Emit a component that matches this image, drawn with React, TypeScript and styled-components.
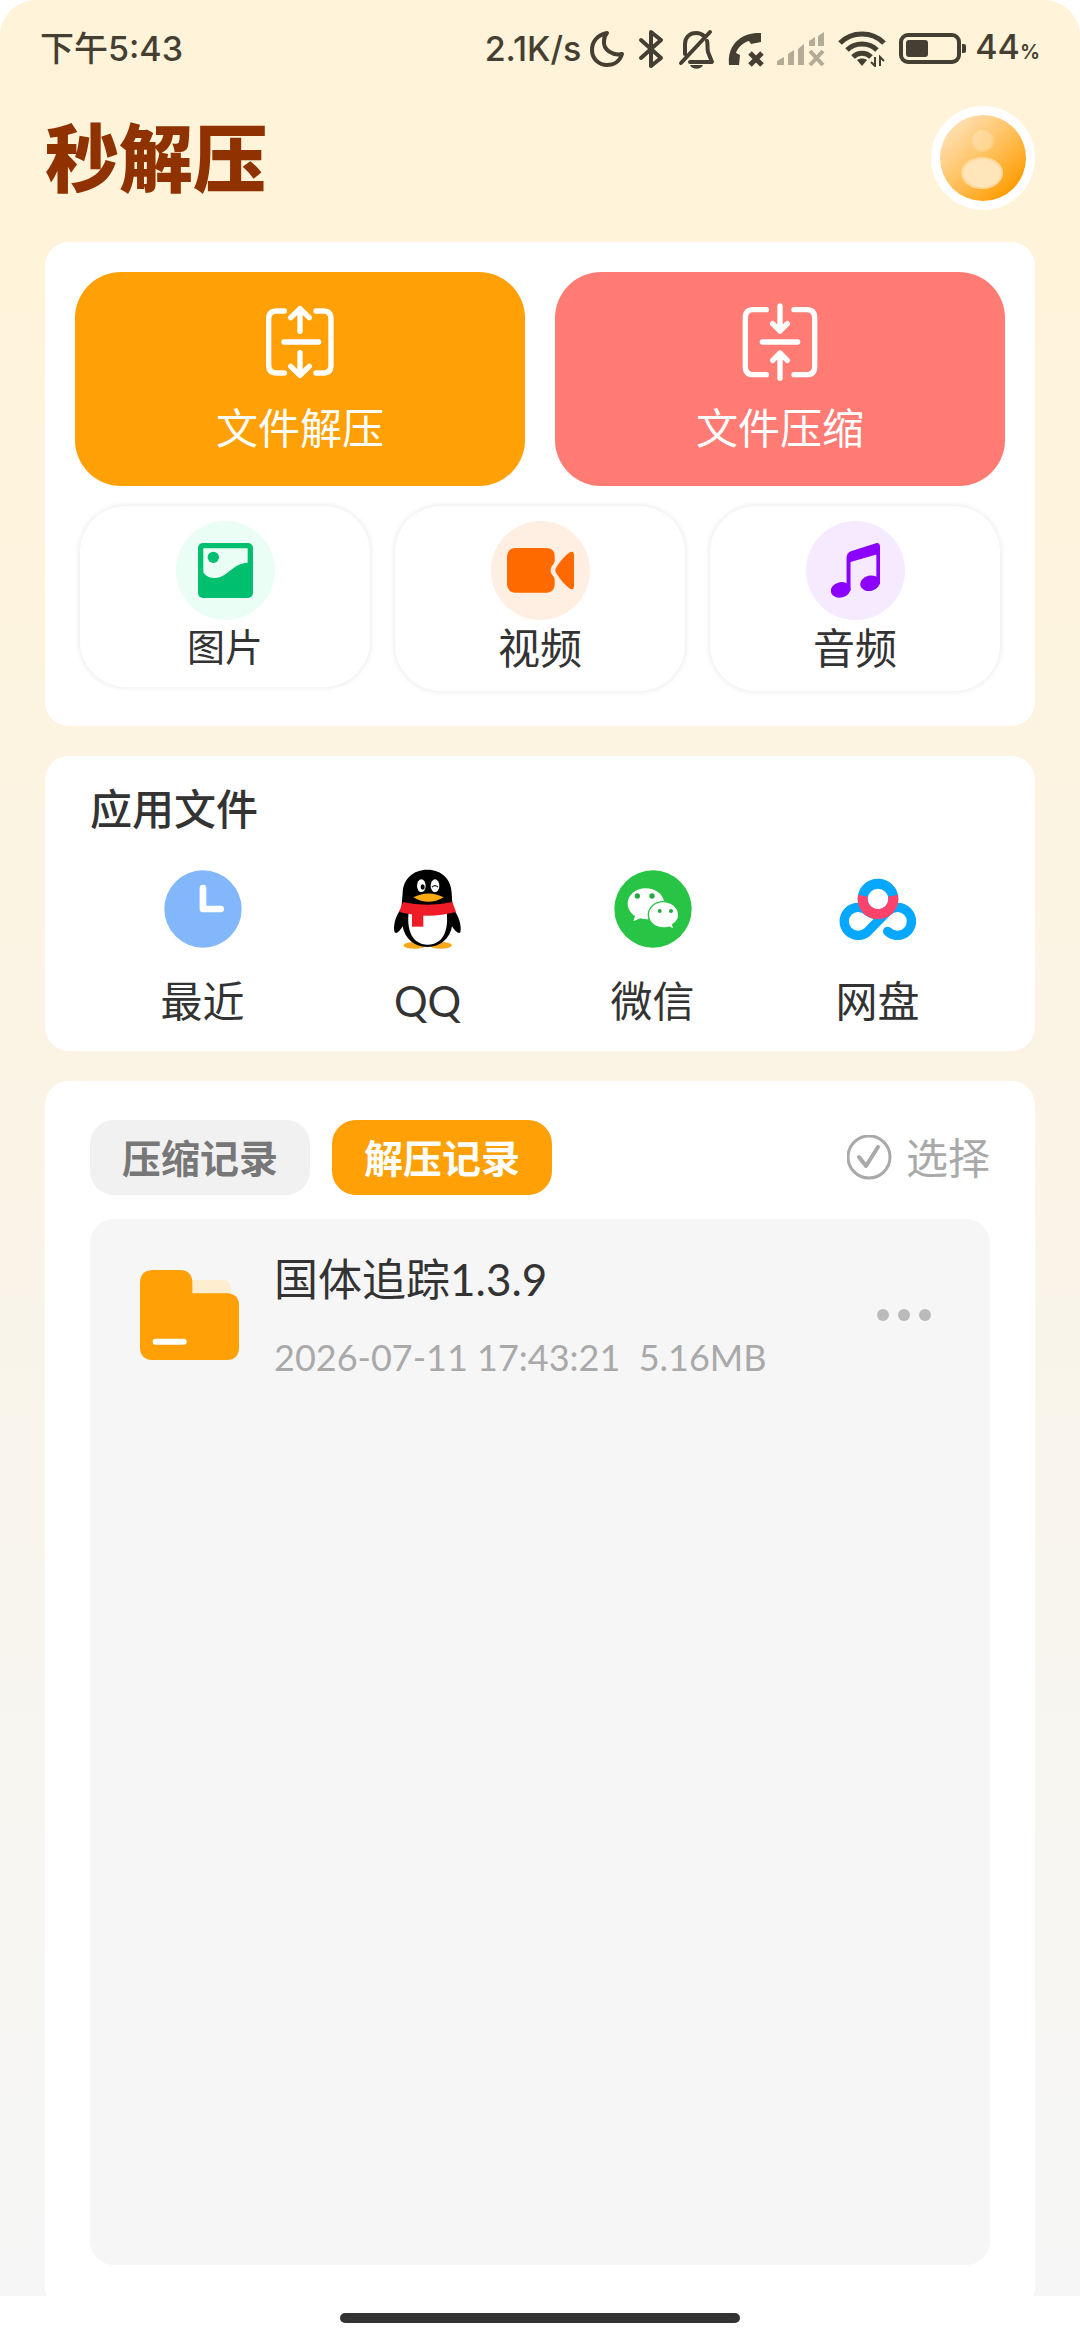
import React, { useState } from "react";
import styled, { createGlobalStyle } from "styled-components";

const GlobalStyle = createGlobalStyle`
  *, *::before, *::after { box-sizing: border-box; }
  body {
    margin: 0;
    background: #ffffff;
    color: #333333;
    font-family: Lato, "Noto Sans CJK SC", sans-serif;
  }
  button {
    border: 0;
    padding: 0;
    margin: 0;
    background: none;
    color: inherit;
    font: inherit;
    cursor: pointer;
  }
  h1, h2, p, ul { margin: 0; padding: 0; }
  svg { display: block; flex: none; }
`;

const Screen = styled.div`
  display: flex;
  flex-direction: column;
  min-height: 100vh;
`;

const Page = styled.div`
  flex: 1;
  display: flex;
  flex-direction: column;
  overflow: hidden;
  border-radius: 36px 36px 0 0;
  background: linear-gradient(180deg, #fff3d9 0%, #fff3d9 10%, #fbf4e5 45%, #f7f6f2 80%, #f6f6f6 100%);
`;

const StatusBar = styled.div`
  display: flex;
  align-items: center;
  justify-content: space-between;
  height: 98px;
  padding: 0 40px;
  color: #453f33;
  font-family: Inter, "Noto Sans CJK SC", sans-serif;
  font-size: 34px;
  line-height: 48px;
  font-weight: 500;
`;

const StatusGroup = styled.div`
  display: flex;
  align-items: center;
`;

const StatusIcons = styled.div`
  display: flex;
  align-items: center;
  gap: 13px;
  padding: 0 8px;
`;

const Percent = styled.small`
  font-size: 20px;
  font-weight: 600;
`;

const Header = styled.header`
  display: flex;
  align-items: center;
  justify-content: space-between;
  padding: 8px 45px 32px;
`;

const Brand = styled.h1`
  padding-bottom: 8px;
  color: #8f3200;
  font-family: "Noto Sans CJK SC", sans-serif;
  font-size: 74px;
  line-height: 92px;
  font-weight: 900;
`;

const AvatarButton = styled.button`
  border-radius: 50%;
`;

const Content = styled.main`
  flex: 1;
  display: flex;
  flex-direction: column;
  gap: 30px;
  padding: 0 45px;
`;

const Card = styled.section`
  border-radius: 24px;
  background: #ffffff;
`;

const ActionsCard = styled(Card)`
  display: flex;
  flex-direction: column;
  gap: 20px;
  padding: 30px 30px 35px;
`;

const MainActions = styled.div`
  display: grid;
  grid-template-columns: 1fr 1fr;
  gap: 30px;
`;

const MainAction = styled.button<{ $tone: string }>`
  display: flex;
  flex-direction: column;
  align-items: center;
  gap: 18px;
  padding: 30px;
  border-radius: 46px;
  background: ${(p) => p.$tone};
  color: #ffffff;
  font-size: 42px;
  line-height: 56px;
`;

const MediaActions = styled.div`
  display: grid;
  grid-template-columns: repeat(3, 1fr);
  align-items: start;
  gap: 25px;
  padding: 0 5px;
`;

const MediaAction = styled.button<{ $compact?: boolean }>`
  display: flex;
  flex-direction: column;
  align-items: center;
  padding: 15px;
  border-radius: 46px;
  box-shadow: 0 0 4px 2px rgba(0, 0, 0, 0.06);
  font-size: ${(p) => (p.$compact ? 38 : 42)}px;
  line-height: ${(p) => (p.$compact ? 52 : 56)}px;
`;

const MediaBadge = styled.span<{ $tone: string }>`
  display: grid;
  place-items: center;
  width: 99px;
  height: 99px;
  border-radius: 50%;
  background: ${(p) => p.$tone};
`;

const AppsCard = styled(Card)`
  padding: 25px 45px 22px;
`;

const CardTitle = styled.h2`
  font-size: 42px;
  line-height: 56px;
  font-weight: 500;
`;

const AppGrid = styled.div`
  display: grid;
  grid-template-columns: repeat(4, 1fr);
  padding-top: 32px;
`;

const AppButton = styled.button`
  display: flex;
  flex-direction: column;
  align-items: center;
  gap: 24px;
  font-size: 42px;
  line-height: 56px;
`;

const RecordsCard = styled(Card)`
  flex: 1;
  display: flex;
  flex-direction: column;
  gap: 24px;
  margin-bottom: -15px;
  padding: 39px 45px 46px;
`;

const RecordsBar = styled.div`
  display: flex;
  align-items: center;
  justify-content: space-between;
`;

const Tabs = styled.div`
  display: flex;
  gap: 22px;
`;

const Tab = styled.button<{ $active: boolean }>`
  height: 75px;
  padding: 0 32px;
  border-radius: 24px;
  background: ${(p) => (p.$active ? "#ffa006" : "#f1f1f1")};
  color: ${(p) => (p.$active ? "#ffffff" : "#777777")};
  font-size: 39px;
  line-height: 52px;
  font-weight: 700;
`;

const SelectButton = styled.button`
  display: flex;
  align-items: center;
  gap: 14px;
  color: #a9a9a9;
  font-size: 42px;
  line-height: 56px;
`;

const RecordList = styled.ul`
  flex: 1;
  border-radius: 24px;
  background: #f6f6f6;
  list-style: none;
`;

const Record = styled.li`
  display: flex;
  align-items: center;
  gap: 35px;
  min-height: 192px;
  padding: 30px 50px;
`;

const RecordText = styled.div`
  flex: 1;
  display: flex;
  flex-direction: column;
  gap: 24px;
`;

const RecordName = styled.p`
  font-size: 44px;
  line-height: 60px;
`;

const RecordMeta = styled.p`
  color: #a9a9a9;
  font-size: 36px;
  line-height: 48px;
  white-space: pre;
`;

const MoreButton = styled.button`
  display: flex;
  gap: 9px;
  padding: 20px 9px;
`;

const Dot = styled.span`
  width: 12px;
  height: 12px;
  border-radius: 50%;
  background: #bababa;
`;

const NavBar = styled.footer`
  display: flex;
  align-items: center;
  justify-content: center;
  height: 44px;
  background: #ffffff;
`;

const HomeIndicator = styled.div`
  width: 37%;
  height: 10px;
  border-radius: 5px;
  background: #333333;
`;

const INK = "#453f33";

const MoonIcon = () => (
  <svg width="36" height="38" viewBox="0 0 36 38" fill="none" stroke={INK} strokeWidth="4" strokeLinejoin="round">
    <path d="M18 3C8 5 3 12 3 20c0 9 7 15 15 15 7 0 13-4 15-11-9 2-19-4-18-13 0-3 1-6 3-8z" />
  </svg>
);

const BluetoothIcon = () => (
  <svg width="26" height="40" viewBox="0 0 26 40" fill="none" stroke={INK} strokeWidth="4" strokeLinejoin="round" strokeLinecap="round">
    <path d="M3 11l20 18-10 8V3l10 8L3 29" />
  </svg>
);

const BellOffIcon = () => (
  <svg width="38" height="40" viewBox="0 0 38 40" fill="none" stroke={INK} strokeWidth="4" strokeLinecap="round" strokeLinejoin="round">
    <path d="M33 3L4 34M8 25V15C8 8 13 4 19 4c3 0 6 1 8 3M30 12c1 3 0 7 1 11l4 10H13" />
    <path d="M13 36c2 5 11 5 13 0z" fill={INK} stroke="none" />
  </svg>
);

const PhoneOffIcon = () => (
  <svg width="36" height="36" viewBox="0 0 36 36">
    <path d="M1 34h10l1-10-4-2C10 16 16 11 21 10l2 3 10-2V2C15 1-1 12 1 34z" fill={INK} />
    <path d="M22 22l12 12M34 22L22 34" stroke={INK} strokeWidth="5" fill="none" />
  </svg>
);

const SignalIcon = () => (
  <svg width="48" height="34" viewBox="0 0 48 34" fill="#b3ab98">
    <path d="M0 33v-4l7-4v8zM11 33V22l6-4v15zM21 33V17l6-5v21zM32 14V9l6-4v9zM41 14V4l6-4v14z" />
    <path d="M33 19l13 14M46 19L33 33" stroke="#b3ab98" strokeWidth="4" fill="none" />
  </svg>
);

const WifiIcon = () => (
  <svg width="48" height="36" viewBox="0 0 48 36" fill="none" stroke={INK} strokeWidth="5">
    <path d="M2 12C14 0 34 0 46 12M9 19c8-8 22-8 30 0M15 26c5-5 13-5 18 0" />
    <path d="M19 29c3-2 7-2 10 0l-5 6z" fill={INK} stroke="none" />
    <path d="M37 26v9l-4-4M42 35v-9l4 4" strokeWidth="2" />
  </svg>
);

const BatteryIcon = () => (
  <svg width="68" height="32" viewBox="0 0 68 32">
    <rect x="2" y="2" width="58" height="27" rx="7" fill="none" stroke={INK} strokeWidth="4" />
    <rect x="7" y="7" width="22" height="17" rx="3" fill={INK} />
    <path d="M63 11h2a2 2 0 0 1 2 2v5a2 2 0 0 1-2 2h-2z" fill={INK} />
  </svg>
);

const Avatar = () => (
  <svg width="104" height="104" viewBox="0 0 104 104">
    <defs>
      <linearGradient id="avatar-skin" x1="0.15" y1="0.1" x2="0.85" y2="0.85">
        <stop offset="0" stopColor="#ffe0b5" />
        <stop offset="0.5" stopColor="#ffc260" />
        <stop offset="1" stopColor="#ff9d05" />
      </linearGradient>
      <linearGradient id="avatar-head" x1="0" y1="0" x2="1" y2="1">
        <stop offset="0" stopColor="#ffdda8" />
        <stop offset="1" stopColor="#ffd48c" />
      </linearGradient>
    </defs>
    <circle cx="52" cy="52" r="52" fill="#ffffff" />
    <circle cx="52" cy="52" r="43" fill="url(#avatar-skin)" />
    <circle cx="51" cy="34" r="11" fill="url(#avatar-head)" stroke="#ffcf82" strokeWidth="2" />
    <ellipse cx="51" cy="67" rx="20" ry="15" fill="#ffe5b9" stroke="#ffd999" strokeWidth="2" />
  </svg>
);

const UnzipIcon = () => (
  <svg width="80" height="80" viewBox="0 0 240 240" fill="none" stroke="#ffffff" strokeWidth="16" strokeLinecap="round" strokeLinejoin="round">
    <path d="M73 27H50Q26 27 26 51V189Q26 213 50 213H73M168 27H190Q213 27 213 51V189Q213 213 190 213H168" />
    <path d="M120 88V20M92 47l28-27 28 27M72 120H176M120 152v68M92 193l28 27 28-27" />
  </svg>
);

const ZipIcon = () => (
  <svg width="80" height="80" viewBox="0 0 240 240" fill="none" stroke="#ffffff" strokeWidth="16" strokeLinecap="round" strokeLinejoin="round">
    <path d="M79 23H40Q16 23 16 47V194Q16 218 40 218H79M162 23H200Q224 23 224 47V194Q224 218 200 218H162" />
    <path d="M120 12V87M98 65l22 22 22-22M67 120H173M120 229V153M98 175l22-22 22 22" />
  </svg>
);

const PictureIcon = () => (
  <svg width="55" height="55" viewBox="0 0 165 165">
    <rect width="165" height="165" rx="15" fill="#00c070" />
    <path d="M16 16H149V59C100 62 90 105 48 105 32 105 22 98 16 88Z" fill="#ebfef6" />
    <circle cx="46" cy="43" r="17" fill="#00c070" />
  </svg>
);

const VideoIcon = () => (
  <svg width="67" height="45" viewBox="0 0 201 135" fill="#ff6a00">
    <path d="M24 0H120Q143 2 143 24V40Q142 47 134 55Q128 67 134 79Q142 87 143 94V110Q142 132 120 134H24Q2 132 0 110V24Q2 2 24 0Z" />
    <path d="M148 76Q142 67 148 58Q168 26 190 12Q200 8 201 20V116Q199 127 190 123Q166 106 148 76Z" />
  </svg>
);

const MusicIcon = () => (
  <svg width="49" height="55" viewBox="0 0 148 165" fill="#8c00ff">
    <path d="M47 44Q48 28 60 24L136 0Q147-2 148 10V124H137V34L59 57V144H47Z" />
    <ellipse cx="29" cy="141" rx="30" ry="23" transform="rotate(-14 29 141)" />
    <ellipse cx="118" cy="121" rx="30" ry="23" transform="rotate(-14 118 121)" />
  </svg>
);

const ClockIcon = () => (
  <svg width="80" height="80" viewBox="0 0 240 240">
    <circle cx="120" cy="120" r="116" fill="#82b8fb" />
    <path d="M120 57V120H173" fill="none" stroke="#ffffff" strokeWidth="20" strokeLinecap="round" strokeLinejoin="round" />
  </svg>
);

const PenguinIcon = () => (
  <svg width="80" height="80" viewBox="0 0 240 240">
    <ellipse cx="80" cy="229" rx="34" ry="10" fill="#f5a81c" />
    <ellipse cx="158" cy="229" rx="34" ry="10" fill="#f5a81c" />
    <path d="M40 118C22 140 14 175 20 190 26 198 38 182 44 172 50 210 80 234 118 234S186 210 192 172C198 182 212 198 217 190 222 172 212 138 194 118L191 72C190 30 160 2 118 2S45 30 44 72Z" fill="#000000" />
    <path d="M62 130H176C182 180 168 227 119 227S56 180 62 130Z" fill="#ffffff" />
    <path d="M45 99Q118 116 193 99L204 129Q120 151 33 129Z" fill="#ee1c27" />
    <rect x="72" y="132" width="34" height="41" fill="#ee1c27" />
    <ellipse cx="100" cy="50" rx="13" ry="19" fill="#ffffff" />
    <ellipse cx="141" cy="50" rx="13" ry="19" fill="#ffffff" />
    <ellipse cx="104" cy="54" rx="6" ry="8" fill="#000000" />
    <path d="M132 54Q141 46 150 54" fill="none" stroke="#222222" strokeWidth="4" />
    <path d="M76 85Q122 62 167 85Q122 112 76 85Z" fill="#fbaa12" />
  </svg>
);

const ChatIcon = () => (
  <svg width="80" height="80" viewBox="0 0 240 240">
    <circle cx="120" cy="120" r="116" fill="#28c445" />
    <path d="M98 58C68 58 44 78 44 104 44 119 53 132 66 141L61 157 82 148Q98 153 112 149L154 100C150 74 126 58 98 58Z" fill="#ffffff" />
    <path d="M151 98C126 98 106 115 106 137S126 177 151 177Q160 177 168 174L183 182 179 167C190 160 197 150 197 137 197 115 176 98 151 98Z" fill="#ffffff" stroke="#28c445" strokeWidth="4" />
    <g fill="#28a745">
      <circle cx="73" cy="81" r="8" />
      <circle cx="117" cy="81" r="8" />
      <circle cx="140" cy="126" r="6" />
      <circle cx="174" cy="126" r="6" />
    </g>
  </svg>
);

const CloudDriveIcon = () => (
  <svg width="80" height="80" viewBox="0 0 240 240" fill="none" strokeWidth="28">
    <path d="M90 187A42 42 0 1 1 90 127M90 187L149 127A42 42 0 1 1 149 187" stroke="#06a7ff" strokeLinecap="round" />
    <circle cx="120" cy="90" r="46" fill="#ffffff" stroke="#06a7ff" strokeWidth="30" />
    <path d="M75 80A46 46 0 1 0 165 80" stroke="#ff436a" strokeWidth="30" />
  </svg>
);

const CheckIcon = () => (
  <svg width="45" height="45" viewBox="0 0 45 45" fill="none" stroke="#a9a9a9" strokeLinecap="round" strokeLinejoin="round">
    <circle cx="22" cy="22" r="21" strokeWidth="3" />
    <path d="M12 22l7 9 12-19" strokeWidth="4" />
  </svg>
);

const FolderIcon = () => (
  <svg width="99" height="90" viewBox="0 0 297 270">
    <rect x="120" y="30" width="152" height="70" rx="22" fill="#ffedcf" />
    <path d="M36 0H121Q157 2 157 38V70H261Q297 72 297 106V234Q295 270 261 270H36Q2 268 0 234V36Q2 2 36 0Z" fill="#ffa006" />
    <path d="M47 215H131" stroke="#ffffff" strokeWidth="18" strokeLinecap="round" />
  </svg>
);

const apps = [
  { name: "最近", Icon: ClockIcon },
  { name: "QQ", Icon: PenguinIcon },
  { name: "微信", Icon: ChatIcon },
  { name: "网盘", Icon: CloudDriveIcon },
];

const media = [
  { name: "图片", Icon: PictureIcon, tone: "#ebfef6", compact: true },
  { name: "视频", Icon: VideoIcon, tone: "#ffeee2", compact: false },
  { name: "音频", Icon: MusicIcon, tone: "#f5eaff", compact: false },
];

const tabs = ["压缩记录", "解压记录"];

export default function App() {
  const [activeTab, setActiveTab] = useState("解压记录");

  return (
    <Screen>
      <GlobalStyle />
      <Page>
        <StatusBar>
          <span>下午5:43</span>
          <StatusGroup>
            <span>2.1K/s</span>
            <StatusIcons>
              <MoonIcon />
              <BluetoothIcon />
              <BellOffIcon />
              <PhoneOffIcon />
              <SignalIcon />
              <WifiIcon />
              <BatteryIcon />
            </StatusIcons>
            <span>
              44<Percent>%</Percent>
            </span>
          </StatusGroup>
        </StatusBar>
        <Header>
          <Brand>秒解压</Brand>
          <AvatarButton aria-label="我的">
            <Avatar />
          </AvatarButton>
        </Header>
        <Content>
          <ActionsCard>
            <MainActions>
              <MainAction $tone="#ffa006">
                <UnzipIcon />
                文件解压
              </MainAction>
              <MainAction $tone="#ff7b74">
                <ZipIcon />
                文件压缩
              </MainAction>
            </MainActions>
            <MediaActions>
              {media.map(({ name, Icon, tone, compact }) => (
                <MediaAction key={name} $compact={compact}>
                  <MediaBadge $tone={tone}>
                    <Icon />
                  </MediaBadge>
                  {name}
                </MediaAction>
              ))}
            </MediaActions>
          </ActionsCard>
          <AppsCard>
            <CardTitle>应用文件</CardTitle>
            <AppGrid>
              {apps.map(({ name, Icon }) => (
                <AppButton key={name}>
                  <Icon />
                  {name}
                </AppButton>
              ))}
            </AppGrid>
          </AppsCard>
          <RecordsCard>
            <RecordsBar>
              <Tabs role="tablist">
                {tabs.map((tab) => (
                  <Tab
                    key={tab}
                    role="tab"
                    aria-selected={tab === activeTab}
                    $active={tab === activeTab}
                    onClick={() => setActiveTab(tab)}
                  >
                    {tab}
                  </Tab>
                ))}
              </Tabs>
              <SelectButton>
                <CheckIcon />
                选择
              </SelectButton>
            </RecordsBar>
            <RecordList>
              <Record>
                <FolderIcon />
                <RecordText>
                  <RecordName>国体追踪1.3.9</RecordName>
                  <RecordMeta>{"2026-07-11 17:43:21  5.16MB"}</RecordMeta>
                </RecordText>
                <MoreButton aria-label="更多">
                  <Dot />
                  <Dot />
                  <Dot />
                </MoreButton>
              </Record>
            </RecordList>
          </RecordsCard>
        </Content>
      </Page>
      <NavBar>
        <HomeIndicator />
      </NavBar>
    </Screen>
  );
}
